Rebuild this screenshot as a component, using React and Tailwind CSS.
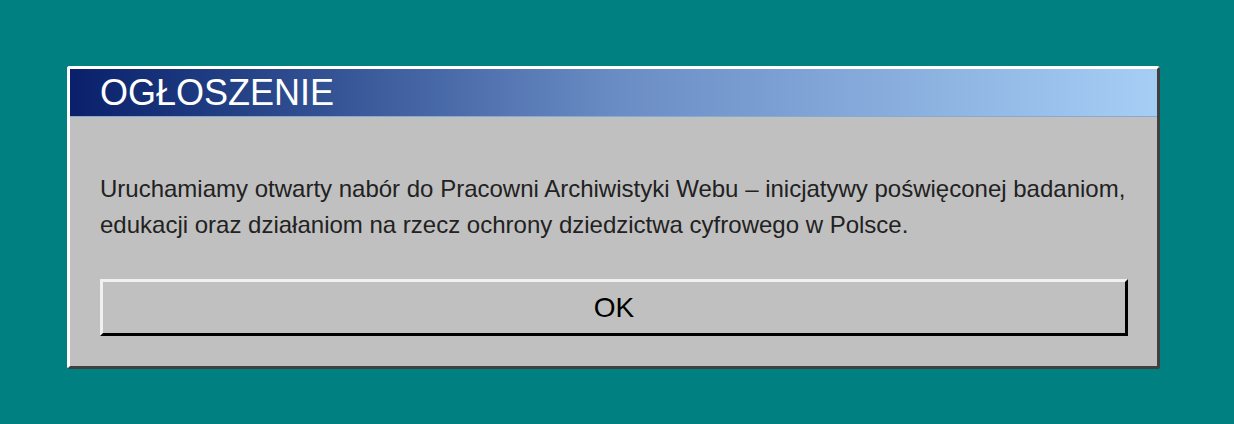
import React from 'react';

const App = () => {
  return (
    <div
      className="w-[1234px] h-[424px] bg-[#008080] pt-[66px] pl-[67px]"
      style={{ fontFamily: '"Liberation Sans", Arial, sans-serif' }}
    >
      <div className="w-[1093px] h-[303px] bg-[#c0c0c0] rounded-[3px] border-t-[3px] border-l-[3px] border-r-[3px] border-b-[3px] border-t-white border-l-white border-r-[#404040] border-b-[#404040] flex flex-col">
        {/* Title bar */}
        <div className="h-[48px] flex items-center pl-[30px] bg-gradient-to-r from-[#0a1f6a] via-[#6a8cc4] to-[#a6cef5] border-b border-[#8aa9d0]">
          <h1 className="text-[36px] leading-none text-white">OGŁOSZENIE</h1>
        </div>

        {/* Body */}
        <div className="flex flex-col pl-[30px] pr-[29px] pt-[54px]">
          <p className="text-[24px] leading-[36px] text-[#222]">
            Uruchamiamy otwarty nabór do Pracowni Archiwistyki Webu – inicjatywy poświęconej badaniom,
            edukacji oraz działaniom na rzecz ochrony dziedzictwa cyfrowego w Polsce.
          </p>
          <button className="mt-[36px] h-[57px] w-full bg-[#c0c0c0] border-[3px] border-t-[#f0f0f0] border-l-[#f0f0f0] border-r-black border-b-black text-[28px] text-black">
            OK
          </button>
        </div>
      </div>
    </div>
  );
};

export default App;
